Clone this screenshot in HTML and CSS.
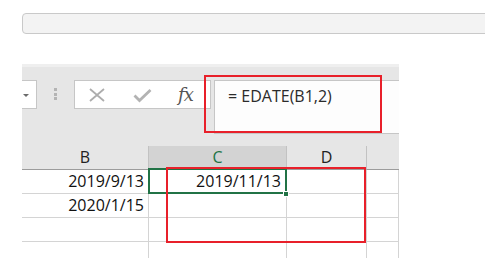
FILE: index.html
```html
<!DOCTYPE html>
<html>
	<head>
		<meta charset="utf-8" />
		<title>EDATE</title>
		<link rel="stylesheet" href="styles.css">
	</head>
	<body>
		<div class="search"></div>
		<div class="excel">
			<div class="fbar">
				<div class="namebox"><span class="caret"></span></div>
				<div class="grip"><i></i><i></i><i></i></div>
				<div class="fbtns">
					<svg class="ico-x" width="16" height="14" viewBox="0 0 16 14">
						<path d="M1 1 L15 13 M15 1 L1 13" stroke="#adadad" stroke-width="1.8" fill="none"/>
					</svg>
					<svg class="ico-ok" width="19" height="15" viewBox="0 0 19 15">
						<path d="M1.5 7.5 L6.5 12.5 L17.5 2" stroke="#b3b3b3" stroke-width="2.8" fill="none"/>
					</svg>
					<span class="fx">fx</span>
				</div>
				<div class="finput">= EDATE(B1,2)</div>
			</div>
			<div class="grid">
				<div class="hd">B</div>
				<div class="hd hd-sel">C</div>
				<div class="hd">D</div>
				<div class="hd hd-end"></div>

				<div class="cell">2019/9/13</div>
				<div class="cell cell-sel">2019/11/13<span class="handle"></span></div>
				<div class="cell"></div>
				<div class="cell cell-end"></div>

				<div class="cell">2020/1/15</div>
				<div class="cell"></div>
				<div class="cell"></div>
				<div class="cell cell-end"></div>

				<div class="cell"></div>
				<div class="cell"></div>
				<div class="cell"></div>
				<div class="cell cell-end"></div>

				<div class="cell cell-last"></div>
				<div class="cell cell-last"></div>
				<div class="cell cell-last"></div>
				<div class="cell cell-last cell-end"></div>
			</div>
			<div class="mark mark-formula"></div>
			<div class="mark mark-cells"></div>
		</div>
	</body>
</html>
```

FILE: styles.css
```css
*{
	padding: 0px;
	margin: 0px;
	box-sizing: border-box;
}
body{
	background: #fff;
	overflow: hidden;
	font-family: "Open Sans", "Liberation Sans", sans-serif;
}
.search{
	height: 21px;
	margin: 13px -10px 0 22px;
	background: #f3f3f3;
	border: 1px solid #c9c9c9;
	border-radius: 4px;
}
.excel{
	position: relative;
	width: 377px;
	margin: 30px 0 0 22px;
}
.fbar{
	height: 82px;
	background: #e6e6e6;
	border-top: 3px solid #efefef;
	padding-top: 13px;
	display: flex;
	align-items: flex-start;
}
.namebox{
	width: 15px;
	height: 29px;
	background: #fff;
	border: 1px solid #c6c6c6;
	border-left: none;
	position: relative;
}
.caret{
	position: absolute;
	left: 1px;
	top: 13px;
	border-left: 3px solid transparent;
	border-right: 3px solid transparent;
	border-top: 3px solid #6b6b6b;
}
.grip{
	margin: 8px 0 0 17px;
	width: 3px;
	display: flex;
	flex-direction: column;
	gap: 1.5px;
}
.grip i{
	display: block;
	width: 3px;
	height: 3px;
	background: #b4b4b4;
}
.fbtns{
	margin-left: 17px;
	width: 137px;
	height: 29px;
	background: #fff;
	border: 1px solid #c6c6c6;
	display: flex;
	align-items: center;
}
.ico-x{
	margin-left: 14px;
}
.ico-ok{
	margin-left: 28px;
	margin-top: 1px;
}
.fx{
	margin-left: 26px;
	font-family: "DejaVu Serif", "Liberation Serif", serif;
	font-style: italic;
	font-size: 18px;
	line-height: 20px;
	color: #555;
	letter-spacing: -1px;
}
.finput{
	flex: 1;
	margin-left: 3px;
	height: 54px;
	background: #fdfdfd;
	border: 1px solid #c6c6c6;
	border-right: none;
	padding: 3px 0 0 13px;
	font-size: 16px;
	line-height: 24px;
	color: #2b2b2b;
}
.grid{
	display: grid;
	grid-template-columns: 127px 138px 80px 1fr;
	grid-template-rows: 24px 24px 24px 24px 16px;
	font-size: 16px;
	color: #111;
}
.hd{
	background: #e6e6e6;
	border-right: 1px solid #c2c2c2;
	border-bottom: 1px solid #9c9c9c;
	text-align: center;
	line-height: 23px;
	color: #222;
}
.hd-sel{
	background: #d3d3d3;
	color: #217346;
}
.hd-end, .cell-end{
	border-right: none;
}
.cell{
	border-right: 1px solid #d4d4d4;
	border-bottom: 1px solid #d4d4d4;
	text-align: right;
	padding-right: 4px;
	line-height: 23px;
}
.cell-last{
	border-bottom: none;
}
.cell-sel{
	position: relative;
	padding-right: 5px;
}
.cell-sel::after{
	content: "";
	position: absolute;
	left: -1px;
	top: -2px;
	right: -1px;
	bottom: -1px;
	border: 2px solid #217346;
}
.handle{
	position: absolute;
	right: -3px;
	bottom: -4px;
	width: 6px;
	height: 6px;
	background: #217346;
	border: 1px solid #fff;
	z-index: 1;
}
.mark{
	position: absolute;
	border: 2px solid #e8202a;
}
.mark-formula{
	left: 182px;
	top: 11px;
	width: 178px;
	height: 58px;
}
.mark-cells{
	left: 144px;
	top: 103px;
	width: 200px;
	height: 76px;
}
```
